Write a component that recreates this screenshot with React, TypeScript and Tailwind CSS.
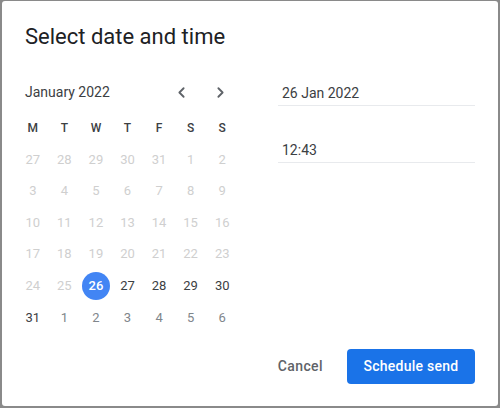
import { ChevronLeft, ChevronRight } from 'lucide-react'
import { clsx } from 'clsx'

type Day = { n: number; kind: 'past' | 'current' | 'next' }

const WEEKDAYS = ['M', 'T', 'W', 'T', 'F', 'S', 'S']

function buildDays(): Day[] {
  const days: Day[] = []
  for (let n = 27; n <= 31; n++) days.push({ n, kind: 'past' })
  for (let n = 1; n <= 31; n++) days.push({ n, kind: n < 26 ? 'past' : 'current' })
  for (let n = 1; n <= 6; n++) days.push({ n, kind: 'next' })
  return days
}

export default function App() {
  const days = buildDays()
  const selected = 26

  return (
    <div className="w-[500px] h-[408px] bg-[#8a8a8a] pt-px pl-[2px] pr-[2px] pb-[2px] font-['Roboto',sans-serif]">
      <div className="h-full bg-white rounded-[3px] flex flex-col">
        <h1 className="pl-[23px] pt-[22px] text-[22px] leading-[28px] text-[#202124]">Select date and time</h1>

        <div className="flex mt-[25px]">
          {/* calendar */}
          <div className="pl-[15px] w-[236px]">
            <div className="flex items-center h-[32px] pl-[8px]">
              <span className="text-[14px] text-[#3c4043]">January 2022</span>
              <button type="button" className="ml-auto w-[24px] h-[24px] flex items-center justify-center text-[#5f6368]">
                <ChevronLeft size={17} strokeWidth={2.6} />
              </button>
              <button type="button" className="ml-[15px] mr-[6px] w-[24px] h-[24px] flex items-center justify-center text-[#5f6368]">
                <ChevronRight size={17} strokeWidth={2.6} />
              </button>
            </div>
            <div className="grid grid-cols-7 auto-rows-[31.6px] mt-[4px] w-[221px]">
              {WEEKDAYS.map((d, i) => (
                <div key={i} className="flex items-center justify-center text-[12px] font-medium text-[#3c4043]">{d}</div>
              ))}
              {days.map((d, i) => {
                const isSel = d.kind === 'current' && d.n === selected
                return (
                  <div key={i} className="flex items-center justify-center">
                    <span
                      className={clsx(
                        'w-[28px] h-[28px] rounded-full flex items-center justify-center text-[13px]',
                        isSel && 'bg-[#4285f4] text-white font-medium',
                        !isSel && d.kind === 'past' && 'text-[#cfcfcf]',
                        !isSel && d.kind === 'current' && 'text-[#3c4043]',
                        !isSel && d.kind === 'next' && 'text-[#80868b]'
                      )}
                    >
                      {d.n}
                    </span>
                  </div>
                )
              })}
            </div>
          </div>

          {/* inputs */}
          <div className="ml-[40px] w-[197px] flex flex-col">
            <div className="h-[30px] border-b border-[#e8eaed] flex items-end pb-[2px] pl-[4px] text-[14px] leading-[20px] text-[#3c4043]">
              26 Jan 2022
            </div>
            <div className="mt-[27px] h-[30px] border-b border-[#e8eaed] flex items-end pb-[2px] pl-[4px] text-[14px] leading-[20px] text-[#3c4043]">
              12:43
            </div>
          </div>
        </div>

        <div className="mt-auto pb-[22px] pr-[23px] flex justify-end items-center">
          <button type="button" className="h-[35px] px-[12px] text-[14px] font-medium tracking-[0.4px] text-[#5f6368] rounded">Cancel</button>
          <button type="button" className="ml-[12px] h-[35px] w-[128px] rounded-[4px] bg-[#1a73e8] text-white text-[14px] font-medium tracking-[0.25px]">
            Schedule send
          </button>
        </div>
      </div>
    </div>
  )
}
